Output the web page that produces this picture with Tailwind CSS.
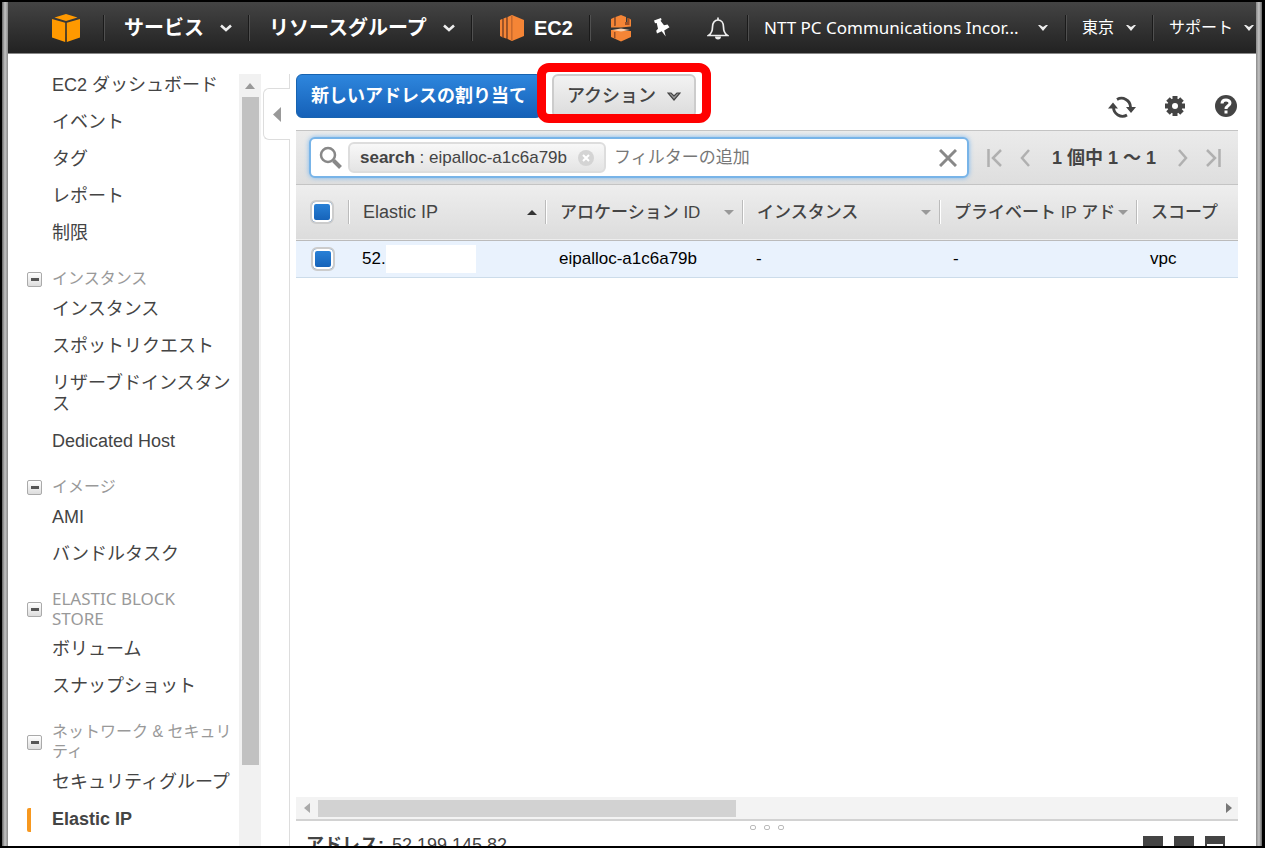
<!DOCTYPE html>
<html lang="ja">
<head>
    <meta charset="UTF-8">
    <title>EC2 Management Console</title>
    <script src="https://cdn.jsdelivr.net/npm/@tailwindcss/browser@4"></script>
</head>
<body class="h-screen overflow-hidden bg-black py-[2px] pl-[2px] pr-[3px] flex font-['Liberation_Sans','Noto_Sans_CJK_JP',sans-serif] text-[#444]">
    <div class="w-[6px] shrink-0 bg-linear-to-r from-[#666] via-[#c4c4c4] to-[#8a8a8a]"></div>

    <div class="flex-1 min-w-0 flex flex-col bg-white">
        <!-- Top navigation -->
        <header class="h-[52px] shrink-0 flex items-center bg-linear-to-b from-[#444] to-[#222] border-b border-[#888] text-white whitespace-nowrap overflow-hidden">
            <a href="#" aria-label="Home" class="w-[95px] shrink-0 flex justify-center pl-[21px]">
                <svg class="w-7 h-7" viewBox="0 0 28 28" fill="#ff9900">
                    <path d="M14 0 25.500 3.500 14 7 2.500 3.500z"/>
                    <path d="M0 5 13.200 8.800V28L0 23.500z"/>
                    <path d="M28 5 14.800 8.800V28L28 23.500z"/>
                </svg>
            </a>
            <button class="h-[26px] w-[145px] shrink-0 flex items-center justify-between pl-5 pr-4 border-l border-[#1a1a1a] shadow-[inset_1px_0_0_#505050] text-xl font-bold">サービス
                <svg class="w-3 h-2" viewBox="0 0 12 8" fill="none" stroke="#eee" stroke-width="2.600"><path d="M1 1.500 6 6l5-4.500"/></svg>
            </button>
            <button class="h-[26px] w-[223px] shrink-0 flex items-center justify-between pl-5 pr-4 border-l border-[#1a1a1a] shadow-[inset_1px_0_0_#505050] text-xl font-bold">リソースグループ
                <svg class="w-3 h-2" viewBox="0 0 12 8" fill="none" stroke="#eee" stroke-width="2.600"><path d="M1 1.500 6 6l5-4.500"/></svg>
            </button>
            <a href="#" class="h-[26px] w-[118px] shrink-0 flex items-center gap-[10px] pl-7 border-l border-[#1a1a1a] shadow-[inset_1px_0_0_#505050] text-xl font-bold">
                <svg class="w-6 h-[26px]" viewBox="0 0 24 26">
                    <path fill="#f58536" d="M12 0 24 5v16l-12 5z"/>
                    <path fill="#f58536" d="M0 5l2-1v18l-2-1zM3.500 3.500 6 2.500v21l-2.500-1zM7.500 2 12 0v26l-4.500-2z"/>
                    <path fill="#9d5025" d="M2 4h1.500v18.500H2zM6 2.500h1.500v21H6zM11.500 1h.8v24h-.8z"/>
                </svg>
                EC2
            </a>
            <div class="h-[26px] w-[158px] shrink-0 flex items-center pl-[21px] pr-[18px] border-l border-[#1a1a1a] shadow-[inset_1px_0_0_#505050]">
                <a href="#" aria-label="Shortcut">
                    <svg class="w-5 h-[28px]" viewBox="0 0 20 28">
                        <path fill="#f58536" d="M10 1v12.500H0V5l3-1.500v8h1.500V3zM10 1l5 2v5h1.500V4L20 5.500v7L10 13.500zM0 16h10v11.500L0 23zM10 17h10v6l-10 4.500z"/>
                        <path fill="#fbd0ab" d="M1 16 10 14.500 19 16l-9 1.500z"/>
                        <path fill="#9d5025" d="M3 3.500 4.500 3v9H3zM3 18h1.500v6.500L3 24zM14 8h3V4h1.500v7H14z"/>
                    </svg>
                </a>
                <button aria-label="Pin" class="ml-[22px]">
                    <svg class="w-[17px] h-[19px]" viewBox="0 0 17 19" fill="#fff">
                        <path d="M1 2.500 8 0l.5 2-1 .8 3.500 4.500 3.500-.8 2 2.700-5.300 3.300 1.500 6-4-5.200L4 15.500l-.8-2.800 1.800-2L3.700 5 2 5.200z"/>
                    </svg>
                </button>
                <button aria-label="Notifications" class="ml-auto">
                    <svg class="w-[22px] h-6" viewBox="0 0 22 24" fill="none" stroke="#eee" stroke-width="1.700">
                        <path d="M1.500 19.500c3-2 4-4 4-8.500 0-4 2-7 5.500-7s5.500 3 5.500 7c0 4.500 1 6.500 4 8.500z"/>
                        <path d="M11 4V1.500"/>
                        <path fill="#eee" stroke="none" d="M8 20.500h6a3 3 0 0 1-6 0z"/>
                    </svg>
                </button>
            </div>
            <button class="h-[26px] flex-1 min-w-0 flex items-center justify-between pl-4 pr-[17px] border-l border-[#1a1a1a] shadow-[inset_1px_0_0_#505050] font-['Noto_Sans'] text-[17px]"><span>NTT PC Communications Incor...</span>
                <svg class="w-[10px] h-[6px]" viewBox="0 0 10 6" fill="#eee"><path d="M0 0h2l3 2 3-2h2L5 6z"/></svg>
            </button>
            <button class="h-[26px] w-[87px] shrink-0 flex items-center justify-between px-4 border-l border-[#1a1a1a] shadow-[inset_1px_0_0_#505050] text-base">東京
                <svg class="w-[10px] h-[6px]" viewBox="0 0 10 6" fill="#eee"><path d="M0 0h2l3 2 3-2h2L5 6z"/></svg>
            </button>
            <button class="h-[26px] w-[104px] shrink-0 flex items-center justify-between pl-4 pr-[2px] border-l border-[#1a1a1a] shadow-[inset_1px_0_0_#505050] text-base">サポート
                <svg class="w-[10px] h-[6px]" viewBox="0 0 10 6" fill="#eee"><path d="M0 0h2l3 2 3-2h2L5 6z"/></svg>
            </button>
        </header>

        <div class="flex-1 min-h-0 flex">
            <!-- Sidebar -->
            <nav class="w-[231px] shrink-0 pt-[13px] text-lg leading-[21px]">
                <ul class="[&>li]:py-2 [&>li]:pl-11">
                    <li><a href="#">EC2 ダッシュボード</a></li>
                    <li><a href="#">イベント</a></li>
                    <li><a href="#">タグ</a></li>
                    <li><a href="#">レポート</a></li>
                    <li><a href="#">制限</a></li>
                </ul>

                <div class="mt-[17px] mb-[2px] pl-[19px] flex items-center gap-[10px]">
                    <button aria-label="折りたたむ" class="w-[15px] h-[15px] shrink-0 flex items-center justify-center border border-[#aaa] rounded-xs bg-linear-to-b from-white to-[#ddd]"><span class="w-2 h-[3px] bg-[#555]"></span></button>
                    <h2 class="text-base leading-5 text-[#999]">インスタンス</h2>
                </div>
                <ul class="[&>li]:py-2 [&>li]:pl-11">
                    <li><a href="#">インスタンス</a></li>
                    <li><a href="#">スポットリクエスト</a></li>
                    <li><a href="#">リザーブドインスタン<br>ス</a></li>
                    <li><a href="#">Dedicated Host</a></li>
                </ul>

                <div class="mt-[17px] mb-[2px] pl-[19px] flex items-center gap-[10px]">
                    <button aria-label="折りたたむ" class="w-[15px] h-[15px] shrink-0 flex items-center justify-center border border-[#aaa] rounded-xs bg-linear-to-b from-white to-[#ddd]"><span class="w-2 h-[3px] bg-[#555]"></span></button>
                    <h2 class="text-base leading-5 text-[#999]">イメージ</h2>
                </div>
                <ul class="[&>li]:py-2 [&>li]:pl-11">
                    <li><a href="#">AMI</a></li>
                    <li><a href="#">バンドルタスク</a></li>
                </ul>

                <div class="mt-4 mb-[2px] pl-[19px] flex items-center gap-[10px]">
                    <button aria-label="折りたたむ" class="w-[15px] h-[15px] shrink-0 flex items-center justify-center border border-[#aaa] rounded-xs bg-linear-to-b from-white to-[#ddd]"><span class="w-2 h-[3px] bg-[#555]"></span></button>
                    <h2 class="text-[17px] leading-5 text-[#999] font-['Noto_Sans']">ELASTIC BLOCK<br>STORE</h2>
                </div>
                <ul class="[&>li]:py-2 [&>li]:pl-11">
                    <li><a href="#">ボリューム</a></li>
                    <li><a href="#">スナップショット</a></li>
                </ul>

                <div class="mt-[17px] mb-[2px] pl-[19px] flex items-center gap-[10px]">
                    <button aria-label="折りたたむ" class="w-[15px] h-[15px] shrink-0 flex items-center justify-center border border-[#aaa] rounded-xs bg-linear-to-b from-white to-[#ddd]"><span class="w-2 h-[3px] bg-[#555]"></span></button>
                    <h2 class="text-base leading-5 text-[#999] whitespace-nowrap">ネットワーク &amp; セキュリ<br>ティ</h2>
                </div>
                <ul class="[&>li]:py-2 [&>li]:pl-11">
                    <li><a href="#" class="whitespace-nowrap">セキュリティグループ</a></li>
                    <li class="relative"><span class="absolute left-[19px] top-[7px] w-1 h-6 rounded-l-xs bg-[#f7981f]"></span><a href="#" class="font-bold">Elastic IP</a></li>
                </ul>
            </nav>

            <!-- Sidebar scrollbar -->
            <div class="w-[22px] shrink-0 mt-5 bg-[#f1f1f1] flex flex-col items-center">
                <div class="h-[23px] flex items-center">
                    <svg class="w-[10px] h-[6px]" viewBox="0 0 10 6" fill="#999"><path d="M5 0l5 6H0z"/></svg>
                </div>
                <div class="w-[17px] h-[89%] max-h-[668px] bg-[#c1c1c1]"></div>
            </div>

            <!-- Collapse handle -->
            <div class="w-[29px] shrink-0 mt-5 pl-[2px] flex flex-col">
                <div class="h-[14px] border-r border-[#ddd]"></div>
                <button aria-label="サイドバーを閉じる" class="h-[52px] flex items-center justify-center border border-r-0 border-[#ddd] rounded-l-md">
                    <svg class="w-2 h-[15px]" viewBox="0 0 8 15" fill="#999"><path d="M8 0v15L0 7.500z"/></svg>
                </button>
                <div class="flex-1 border-r border-[#ddd]"></div>
            </div>

            <!-- Main panel -->
            <main class="flex-1 min-w-0 pl-[6px] pr-[18px] flex flex-col">
                <div class="h-[76px] shrink-0 pt-5 flex items-start">
                    <button class="h-11 w-[246px] px-[14px] text-left whitespace-nowrap rounded-md border border-[#1763b0] bg-linear-to-b from-[#2e86dd] to-[#1561b8] text-white text-lg font-bold">新しいアドレスの割り当て</button>
                    <div class="relative ml-[10px]">
                        <button class="h-11 w-36 px-[13px] flex items-center justify-between rounded-md border-2 border-[#ccc] bg-linear-to-b from-[#f2f2f2] to-[#dcdcdc] text-lg font-medium whitespace-nowrap">アクション
                            <svg class="w-[14px] h-[9px]" viewBox="0 0 14 9" fill="#999" stroke="#444" stroke-width="1.200"><path d="M1 1h3l3 3 3-3h3L7 8z"/></svg>
                        </button>
                        <span class="absolute -left-[15px] -right-[15px] -top-[11px] h-[60px] border-[9px] border-[#f00] rounded-xl pointer-events-none"></span>
                    </div>
                    <div class="ml-auto pt-5 flex items-center gap-[28px]">
                        <button aria-label="更新">
                            <svg class="w-7 h-6" viewBox="0 0 28 24" fill="none" stroke="#444" stroke-width="2.800">
                                <path d="M9 5.500A9 9 0 0 1 22.500 13M19 21A9 9 0 0 1 5.500 13"/>
                                <path fill="#444" stroke="none" d="M18 13h10l-5 6zM0 14.500l5-6 5 6z"/>
                            </svg>
                        </button>
                        <button aria-label="設定">
                            <svg class="w-[22px] h-[22px]" viewBox="0 0 22 22">
                                <g stroke="#444" stroke-width="5"><path d="M11 1v20M1 11h20M4 4l14 14M18 4 4 18"/></g>
                                <circle cx="11" cy="11" r="7.500" fill="#444"/><circle cx="11" cy="11" r="3" fill="#fff"/>
                            </svg>
                        </button>
                        <button aria-label="ヘルプ">
                            <svg class="w-6 h-6" viewBox="0 0 24 24" fill="none">
                                <circle cx="12" cy="12" r="11" fill="#444"/>
                                <path stroke="#fff" stroke-width="3" d="M8 9.500c0-5 8-4.500 8-.5 0 3-4 2.500-4 6"/><path fill="#fff" d="M10.500 16.500h3v3h-3z"/>
                            </svg>
                        </button>
                    </div>
                </div>

                <!-- Filter bar -->
                <div class="h-[55px] shrink-0 flex items-center pl-[13px] pr-[17px] border-t border-b border-[#c4c4c4] bg-linear-to-b from-[#ebebeb] to-[#dedede] text-[17px]">
                    <div class="flex-1 min-w-0 h-[41px] flex items-center pl-2 pr-[10px] bg-white border-2 border-[#78b4e8] rounded-md shadow-[0_0_5px_#7ab8f0]">
                        <svg class="w-6 h-6 shrink-0" viewBox="0 0 24 24" fill="none" stroke="#888"><circle cx="9" cy="9" r="7" stroke-width="2.500"/><path stroke-width="4" d="M14.500 14.500 21.500 21.500"/></svg>
                        <div class="ml-[5px] h-[31px] w-[258px] shrink-0 flex items-center px-[10px] border-2 border-[#ddd] rounded-md bg-linear-to-b from-[#f8f8f8] to-[#e4e4e4] whitespace-nowrap"><b>search</b>&nbsp;:&nbsp;eipalloc-a1c6a79b
                            <button aria-label="削除" class="ml-auto"><svg class="w-4 h-4" viewBox="0 0 16 16"><circle cx="8" cy="8" r="8" fill="#d4d4d4"/><path stroke="#fff" stroke-width="2" d="m5 5 6 6m0-6-6 6"/></svg></button>
                        </div>
                        <input type="text" aria-label="フィルターの追加" placeholder="フィルターの追加" class="ml-2 flex-1 min-w-0 outline-none placeholder:text-[#777]">
                        <button aria-label="クリア"><svg class="w-[18px] h-[18px]" viewBox="0 0 18 18" stroke="#888" stroke-width="3"><path d="m1 1 16 16m0-16L1 17"/></svg></button>
                    </div>
                    <div class="ml-[18px] shrink-0 flex items-center">
                        <button aria-label="最初"><svg class="w-[15px] h-[18px]" viewBox="0 0 15 18" fill="none" stroke="#b0b0b0" stroke-width="2.500"><path d="M1.500 0v18M14 1 6 9l8 8"/></svg></button>
                        <button aria-label="前へ" class="ml-[18px]"><svg class="w-[10px] h-[18px]" viewBox="0 0 10 18" fill="none" stroke="#b0b0b0" stroke-width="2.500"><path d="M9 1 2 9l7 8"/></svg></button>
                        <span class="w-[148px] text-center text-lg font-bold whitespace-nowrap">1 個中 1 ～ 1</span>
                        <button aria-label="次へ"><svg class="w-[10px] h-[18px]" viewBox="0 0 10 18" fill="none" stroke="#b0b0b0" stroke-width="2.500"><path d="m1 1 7 8-7 8"/></svg></button>
                        <button aria-label="最後" class="ml-[18px]"><svg class="w-[15px] h-[18px]" viewBox="0 0 15 18" fill="none" stroke="#b0b0b0" stroke-width="2.500"><path d="M13.500 0v18M1 1l8 8-8 8"/></svg></button>
                    </div>
                </div>

                <!-- Address table -->
                <div class="flex-1 min-h-0 overflow-hidden">
                    <table class="w-full table-fixed border-collapse text-[17px] text-left whitespace-nowrap">
                        <colgroup>
                            <col class="w-[52px]"><col class="w-[197px]"><col class="w-[197px]"><col class="w-[197px]"><col class="w-[197px]"><col>
                        </colgroup>
                        <thead>
                            <tr class="h-[55px] border-b border-[#bbb] bg-linear-to-b from-[#eee] to-[#dcdcdc]">
                                <th class="pl-[14px]"><input type="checkbox" checked aria-label="すべて選択" class="block appearance-none w-6 h-6 border-2 border-[#ccc] rounded-md bg-linear-to-b from-[#2b84da] to-[#1460b6] shadow-[inset_0_0_0_2px_#fff]"></th>
                                <th class="font-medium">
                                    <div class="h-6 flex items-center justify-between pl-[14px] pr-2 border-l border-[#bbb] shadow-[inset_1px_0_0_#fff]"><span class="text-lg">Elastic IP</span>
                                        <svg class="w-[10px] h-[5px]" viewBox="0 0 10 5" fill="#333"><path d="M5 0l5 5H0z"/></svg></div>
                                </th>
                                <th class="font-medium">
                                    <div class="h-6 flex items-center justify-between pl-[14px] pr-2 border-l border-[#bbb] shadow-[inset_1px_0_0_#fff]">アロケーション ID
                                        <svg class="w-[10px] h-[5px]" viewBox="0 0 10 5" fill="#999"><path d="M0 0h10L5 5z"/></svg></div>
                                </th>
                                <th class="font-medium">
                                    <div class="h-6 flex items-center justify-between pl-[14px] pr-2 border-l border-[#bbb] shadow-[inset_1px_0_0_#fff]">インスタンス
                                        <svg class="w-[10px] h-[5px]" viewBox="0 0 10 5" fill="#999"><path d="M0 0h10L5 5z"/></svg></div>
                                </th>
                                <th class="font-medium">
                                    <div class="h-6 flex items-center justify-between pl-[14px] pr-2 border-l border-[#bbb] shadow-[inset_1px_0_0_#fff]">プライベート IP アド
                                        <svg class="w-[10px] h-[5px] shrink-0" viewBox="0 0 10 5" fill="#999"><path d="M0 0h10L5 5z"/></svg></div>
                                </th>
                                <th class="font-medium">
                                    <div class="h-6 flex items-center pl-[14px] border-l border-[#bbb] shadow-[inset_1px_0_0_#fff]">スコープ</div>
                                </th>
                            </tr>
                        </thead>
                        <tbody>
                            <tr class="h-[37px] border-b border-[#ccdcea] bg-[#e9f2fd] text-black">
                                <td class="pl-[15px]"><input type="checkbox" checked aria-label="52. を選択" class="block appearance-none w-6 h-6 border-2 border-[#ccc] rounded-md bg-linear-to-b from-[#2b84da] to-[#1460b6] shadow-[inset_0_0_0_2px_#fff]"></td>
                                <td class="pl-[14px]"><div class="flex items-center">52.<span class="w-[90px] h-7 bg-white"></span></div></td>
                                <td class="pl-[14px]">eipalloc-a1c6a79b</td>
                                <td class="pl-[14px]">-</td>
                                <td class="pl-[14px]">-</td>
                                <td class="pl-[14px]">vpc</td>
                            </tr>
                        </tbody>
                    </table>
                </div>

                <!-- Horizontal scrollbar -->
                <div class="h-6 shrink-0 flex items-center pl-2 pr-[6px] bg-[#f3f3f3] border-b-2 border-[#d2d2d2]">
                    <svg class="w-[6px] h-[10px]" viewBox="0 0 6 10" fill="#aaa"><path d="M6 0v10L0 5z"/></svg>
                    <div class="ml-2 mr-auto w-[45%] h-[17px] bg-[#d2d2d2]"></div>
                    <svg class="w-[6px] h-[10px]" viewBox="0 0 6 10" fill="#777"><path d="M0 0v10l6-5z"/></svg>
                </div>

                <!-- Detail pane -->
                <div class="h-[25px] shrink-0 overflow-hidden">
                    <div class="h-3 pt-1 flex justify-center gap-2">
                        <span class="w-[6px] h-[5px] border border-[#bbb] rounded-xs"></span>
                        <span class="w-[6px] h-[5px] border border-[#bbb] rounded-xs"></span>
                        <span class="w-[6px] h-[5px] border border-[#bbb] rounded-xs"></span>
                    </div>
                    <div class="flex items-start pl-[10px] pr-[13px] text-lg leading-6">
                        <b>アドレス:</b><span class="ml-2">52.199.145.82</span>
                        <div class="ml-auto pt-[3px] flex gap-[11px]">
                            <button aria-label="下部表示" class="w-5 h-5 bg-[#444]"></button>
                            <button aria-label="分割表示" class="w-5 h-5 bg-[#444]"></button>
                            <button aria-label="全体表示" class="w-5 h-5 bg-white border-2 border-t-8 border-[#444]"></button>
                        </div>
                    </div>
                </div>
            </main>
        </div>
    </div>

    <div class="w-[6px] shrink-0 bg-linear-to-r from-[#8a8a8a] via-[#c4c4c4] to-[#666]"></div>
</body>
</html>
